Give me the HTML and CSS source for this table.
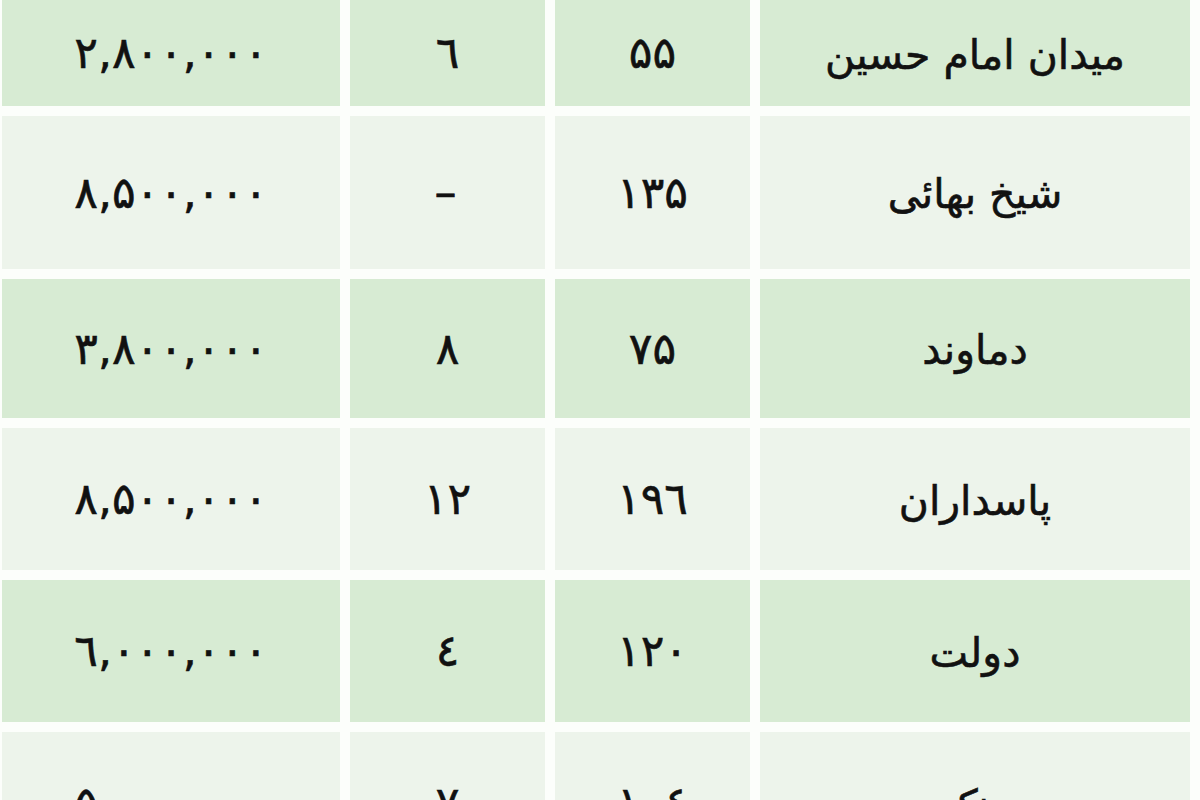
FILE: index.html
```html
<!DOCTYPE html>
<html lang="fa" dir="rtl">
<head>
<meta charset="utf-8">
<title>جدول قیمت</title>
<link rel="stylesheet" href="styles.css">
</head>
<body>
<div class="table">
  <div class="cell name green">میدان امام حسین</div>
  <div class="cell num green">۵۵</div>
  <div class="cell num green">٦</div>
  <div class="cell num green">۲,۸۰۰,۰۰۰</div>

  <div class="cell name light">شیخ بهائی</div>
  <div class="cell num light">۱۳۵</div>
  <div class="cell num light">–</div>
  <div class="cell num light">۸,۵۰۰,۰۰۰</div>

  <div class="cell name green">دماوند</div>
  <div class="cell num green">۷۵</div>
  <div class="cell num green">۸</div>
  <div class="cell num green">۳,۸۰۰,۰۰۰</div>

  <div class="cell name light">پاسداران</div>
  <div class="cell num light">۱۹٦</div>
  <div class="cell num light">۱۲</div>
  <div class="cell num light">۸,۵۰۰,۰۰۰</div>

  <div class="cell name green">دولت</div>
  <div class="cell num green">۱۲۰</div>
  <div class="cell num green">٤</div>
  <div class="cell num green">٦,۰۰۰,۰۰۰</div>

  <div class="cell name light">ونک</div>
  <div class="cell num light">۱۰٤</div>
  <div class="cell num light">۷</div>
  <div class="cell num light">۵,۰۰۰,۰۰۰</div>
</div>
</body>
</html>
```
FILE: styles.css
```css
html, body {
  margin: 0;
  padding: 0;
  background: #fcfefb;
}
body {
  width: 1200px;
  height: 800px;
  overflow: hidden;
  font-family: "DejaVu Sans", sans-serif;
  color: #111;
}
.table {
  direction: rtl;
  display: grid;
  grid-template-columns: 430px 195px 195px 338px;
  grid-template-rows: 106px 153px 139px 142px 142px 142px;
  column-gap: 10px;
  row-gap: 10px;
  padding: 0 10px 0 2px;
}
.cell {
  display: flex;
  align-items: center;
  justify-content: center;
  line-height: 1;
  -webkit-text-stroke: 0.6px #111;
}
.green {
  background: #d7ebd3;
}
.light {
  background: #edf4eb;
}
.name {
  font-size: 41px;
  padding-top: 4px;
}
.num {
  direction: ltr;
  font-size: 44px;
  letter-spacing: 4px;
}
```
